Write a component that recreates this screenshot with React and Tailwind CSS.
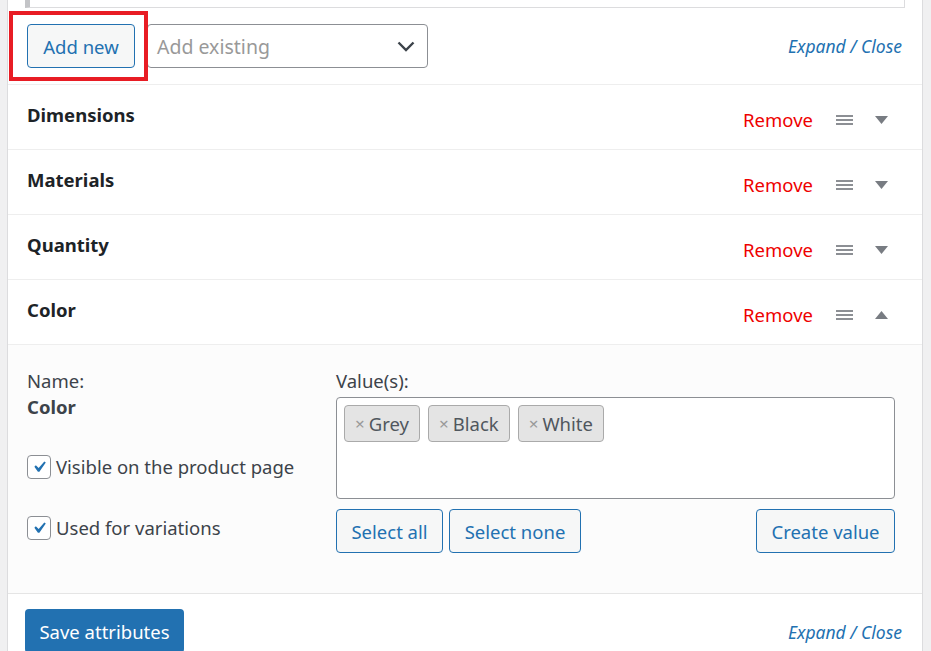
import React from "react";

const font = { fontFamily: '"Noto Sans", "Open Sans", sans-serif' };

function Handle() {
  return (
    <svg width="17" height="10" viewBox="0 0 17 10" className="block">
      <rect x="0" y="0" width="17" height="2" fill="#8c8f94" />
      <rect x="0" y="4" width="17" height="2" fill="#8c8f94" />
      <rect x="0" y="8" width="17" height="2" fill="#8c8f94" />
    </svg>
  );
}

function Caret({ up }) {
  return (
    <svg width="13" height="8" viewBox="0 0 13 8" className="block">
      {up ? <path d="M0 8 L6.5 0 L13 8 Z" fill="#787c82" /> : <path d="M0 0 L13 0 L6.5 8 Z" fill="#787c82" />}
    </svg>
  );
}

function Check({ label, className = "" }) {
  return (
    <label className={`flex items-center gap-[5px] text-[18.5px] leading-[24px] text-[#3c434a] ${className}`}>
      <span className="w-[24px] h-[24px] rounded-[4px] border border-[#8c8f94] bg-white flex items-center justify-center">
        <svg width="28" height="28" viewBox="0 0 20 20">
          <path d="M14.83 4.89l1.34.94-5.81 8.38H9.02L5.78 9.67l1.34-1.25 2.57 2.4z" fill="#2271b1" />
        </svg>
      </span>
      {label}
    </label>
  );
}

function Tag({ label }) {
  return (
    <span className="h-[37px] flex items-center gap-[4px] px-[10px] rounded-[4px] border border-[#aaaaaa] bg-[#e4e4e4] text-[18.5px] text-[#50575e]">
      <span className="text-[#999] text-[17px]">×</span>
      {label}
    </span>
  );
}

function AttrRow({ title, open }) {
  return (
    <div className="h-[65px] flex items-start justify-between border-b border-[#eeeeee] pl-[19px] pr-[34px]">
      <div className="pt-[18px] text-[18.5px] leading-[24px] font-bold text-[#1d2327]">{title}</div>
      <div className="pt-[23px] flex items-center text-[18.5px] leading-[24px]">
        <span className="text-[#ee0000]">Remove</span>
        <span className="ml-[23px]"><Handle /></span>
        <span className="ml-[22px]"><Caret up={open} /></span>
      </div>
    </div>
  );
}

const btn = "h-[44px] pt-[2px] rounded-[4px] border border-[#2271b1] bg-[#f6f7f7] text-[#2271b1] text-[18.5px]";

export default function App() {
  return (
    <div className="relative flex min-h-[651px] bg-[#f0f0f1] overflow-hidden" style={font}>
      <div className="w-[7px] shrink-0 bg-[#f0f0f1]" />
      <div className="w-[916px] shrink-0 bg-white border-l border-r border-[#dcdcde]">
        <div className="h-[8px] ml-[17px] mr-[17px] bg-white border-l-[5px] border-l-[#c3c4c7] border-b border-r border-[#dcdcde]" />

        <div className="flex items-center pt-[16px] pb-[16px] pl-[19px] pr-[20px] border-b border-[#eeeeee]">
          <button className={`${btn} w-[108px]`}>Add new</button>
          <div className="ml-[12px] h-[44px] w-[281px] rounded-[4px] border border-[#8c8f94] bg-white flex items-center justify-between pl-[9px] pr-[12px]">
            <span className="pt-[2px] text-[19.5px] text-[#999999]">Add existing</span>
            <svg width="18" height="11" viewBox="0 0 18 11">
              <path d="M1.5 1.5 L9 9 L16.5 1.5" stroke="#3c434a" strokeWidth="2.4" fill="none" />
            </svg>
          </div>
          <a className="ml-auto text-[17.5px] italic text-[#2271b1]">Expand / Close</a>
        </div>

        <AttrRow title="Dimensions" />
        <AttrRow title="Materials" />
        <AttrRow title="Quantity" />
        <AttrRow title="Color" open />

        <div className="bg-[#fcfcfc] border-b border-[#e5e5e5] pl-[19px] pr-[27px] pt-[23px] pb-[40px] flex">
          <div className="w-[309px] shrink-0">
            <div className="text-[18.5px] leading-[26px] text-[#3c434a]">Name:</div>
            <div className="text-[18.5px] leading-[26px] font-bold text-[#3c434a]">Color</div>
            <Check label="Visible on the product page" className="mt-[35px]" />
            <Check label="Used for variations" className="mt-[37px]" />
          </div>
          <div className="flex-1">
            <div className="text-[18.5px] leading-[26px] text-[#3c434a]">Value(s):</div>
            <div className="mt-[3px] h-[102px] rounded-[4px] border border-[#8c8f94] bg-white pt-[7px] pl-[7px] flex items-start gap-[8px]">
              <Tag label="Grey" />
              <Tag label="Black" />
              <Tag label="White" />
            </div>
            <div className="mt-[10px] flex items-center">
              <button className={`${btn} w-[107px]`}>Select all</button>
              <button className={`${btn} ml-[6px] w-[132px]`}>Select none</button>
              <button className={`${btn} ml-auto w-[139px]`}>Create value</button>
            </div>
          </div>
        </div>

        <div className="flex items-start pt-[15px] pl-[17px] pr-[20px]">
          <button className="h-[44px] pt-[2px] w-[159px] rounded-[4px] bg-[#2271b1] text-white text-[18.5px]">
            Save attributes
          </button>
          <a className="ml-auto mt-[10px] text-[17.5px] italic text-[#2271b1]">Expand / Close</a>
        </div>
      </div>
      <div className="flex-1 bg-[#f0f0f1]" />

      <div className="absolute left-[9px] top-[11px] w-[139px] h-[70px] border-[4px] border-[#e81c24]" />
    </div>
  );
}
